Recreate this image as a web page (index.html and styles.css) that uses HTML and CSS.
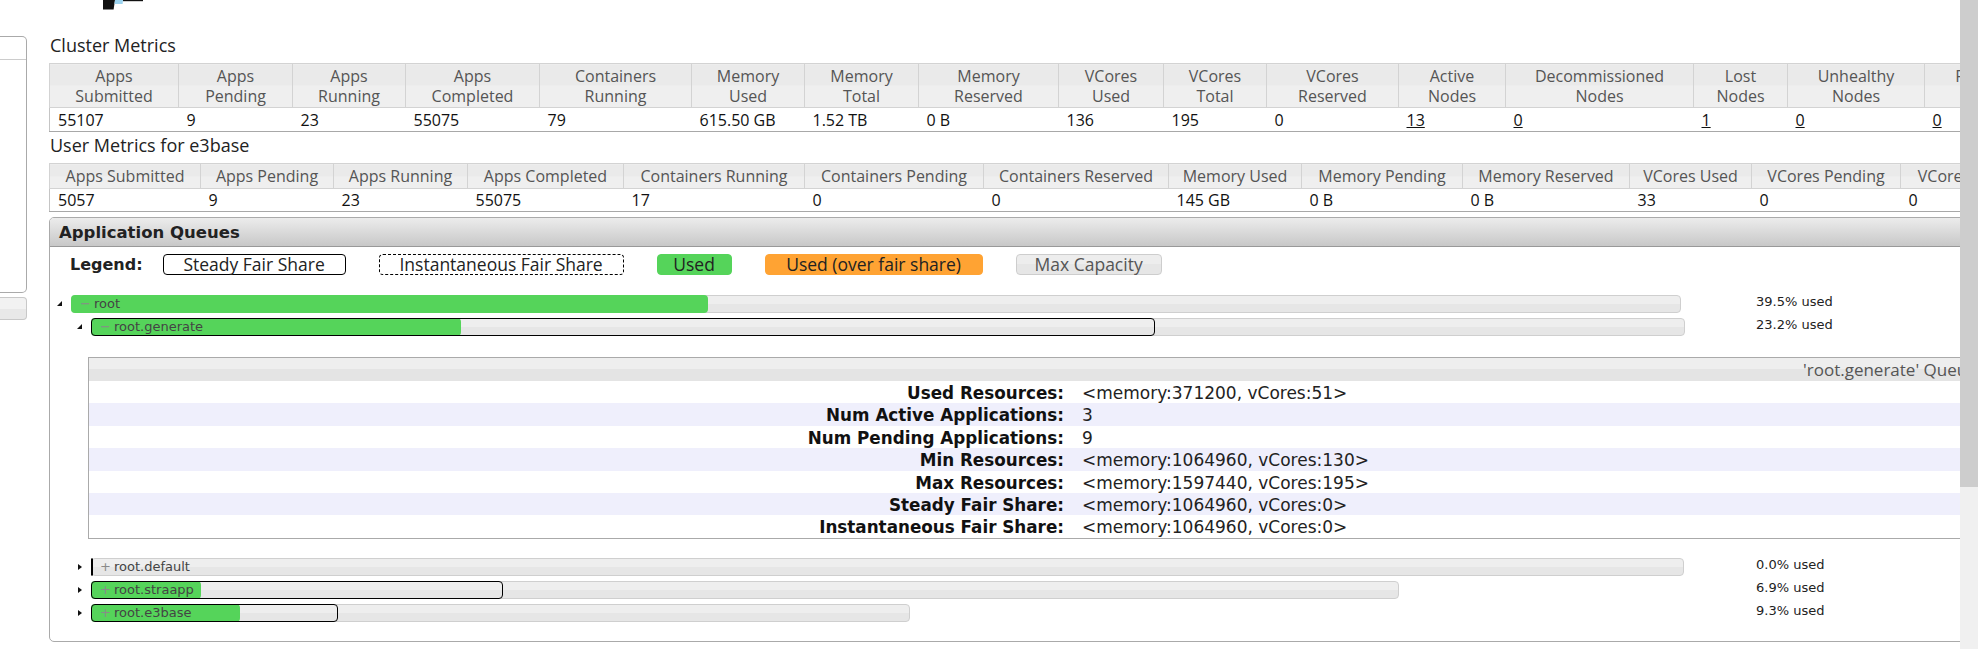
FILE: index.html
```html
<!DOCTYPE html>
<html lang="en">
<head>
<meta charset="utf-8">
<title>Fair Scheduler</title>
<link rel="stylesheet" href="styles.css">
</head>
<body>
<div class="page">
  <header class="top">
    <svg class="logo" width="45" height="10" viewBox="0 0 45 10">
      <path d="M3 0H15L13.6 9.5H3Z" fill="#111"/>
      <path d="M15 0H23L22.6 4H14.5Z" fill="#9cd3ef"/>
      <rect x="23" y="0" width="20" height="1.2" fill="#111"/>
    </svg>
  </header>
  <div class="layout">
    <nav class="nav">
      <div class="nav-box"><div class="nav-head"></div></div>
      <div class="nav-tab"></div>
    </nav>
    <main class="content">
      <h3 class="title">Cluster Metrics</h3>
      <table class="metrics cluster">
        <colgroup>
          <col><col><col><col><col><col><col><col><col><col><col><col><col><col><col><col>
        </colgroup>
        <thead>
          <tr>
            <th>Apps<br>Submitted</th>
            <th>Apps<br>Pending</th>
            <th>Apps<br>Running</th>
            <th>Apps<br>Completed</th>
            <th>Containers<br>Running</th>
            <th>Memory<br>Used</th>
            <th>Memory<br>Total</th>
            <th>Memory<br>Reserved</th>
            <th>VCores<br>Used</th>
            <th>VCores<br>Total</th>
            <th>VCores<br>Reserved</th>
            <th>Active<br>Nodes</th>
            <th>Decommissioned<br>Nodes</th>
            <th>Lost<br>Nodes</th>
            <th>Unhealthy<br>Nodes</th>
            <th>Rebooted<br>Nodes</th>
          </tr>
        </thead>
        <tbody>
          <tr>
            <td>55107</td>
            <td>9</td>
            <td>23</td>
            <td>55075</td>
            <td>79</td>
            <td>615.50 GB</td>
            <td>1.52 TB</td>
            <td>0 B</td>
            <td>136</td>
            <td>195</td>
            <td>0</td>
            <td><a href="#">13</a></td>
            <td><a href="#">0</a></td>
            <td><a href="#">1</a></td>
            <td><a href="#">0</a></td>
            <td><a href="#">0</a></td>
          </tr>
        </tbody>
      </table>

      <h3 class="title">User Metrics for e3base</h3>
      <table class="metrics user">
        <colgroup>
          <col><col><col><col><col><col><col><col><col><col><col><col><col>
        </colgroup>
        <thead>
          <tr>
            <th>Apps Submitted</th>
            <th>Apps Pending</th>
            <th>Apps Running</th>
            <th>Apps Completed</th>
            <th>Containers Running</th>
            <th>Containers Pending</th>
            <th>Containers Reserved</th>
            <th>Memory Used</th>
            <th>Memory Pending</th>
            <th>Memory Reserved</th>
            <th>VCores Used</th>
            <th>VCores Pending</th>
            <th>VCores Reserved</th>
          </tr>
        </thead>
        <tbody>
          <tr>
            <td>5057</td>
            <td>9</td>
            <td>23</td>
            <td>55075</td>
            <td>17</td>
            <td>0</td>
            <td>0</td>
            <td>145 GB</td>
            <td>0 B</td>
            <td>0 B</td>
            <td>33</td>
            <td>0</td>
            <td>0</td>
          </tr>
        </tbody>
      </table>

      <section class="queues">
        <div class="queues-head">Application Queues</div>
        <div class="queues-body">
          <div class="legend">
            <span class="legend-title">Legend:</span>
            <span class="lg lg-steady">Steady Fair Share</span>
            <span class="lg lg-instant">Instantaneous Fair Share</span>
            <span class="lg lg-used">Used</span>
            <span class="lg lg-over">Used (over fair share)</span>
            <span class="lg lg-max">Max Capacity</span>
          </div>

          <ul class="tree">
            <li>
              <div class="qrow">
                <i class="tri tri-open"></i>
                <div class="slot">
                  <div class="bar" style="width:1610px">
                    <span class="used" style="width:637px"></span>
                    <span class="qname"><b class="qicon">−</b>root</span>
                  </div>
                </div>
                <span class="pct">39.5% used</span>
              </div>
              <ul>
                <li>
                  <div class="qrow">
                    <i class="tri tri-open"></i>
                    <div class="slot">
                      <div class="bar" style="width:1594px">
                        <span class="used" style="width:370px"></span>
                        <span class="steady" style="width:1064px"></span>
                        <span class="qname"><b class="qicon">−</b>root.generate</span>
                      </div>
                    </div>
                    <span class="pct">23.2% used</span>
                  </div>
                  <div class="qinfo">
                    <div class="qinfo-head">'root.generate' Queue Status</div>
                    <table class="qinfo-table">
                      <tr><th>Used Resources:</th><td>&lt;memory:371200, vCores:51&gt;</td></tr>
                      <tr><th>Num Active Applications:</th><td>3</td></tr>
                      <tr><th>Num Pending Applications:</th><td>9</td></tr>
                      <tr><th>Min Resources:</th><td>&lt;memory:1064960, vCores:130&gt;</td></tr>
                      <tr><th>Max Resources:</th><td>&lt;memory:1597440, vCores:195&gt;</td></tr>
                      <tr><th>Steady Fair Share:</th><td>&lt;memory:1064960, vCores:0&gt;</td></tr>
                      <tr><th>Instantaneous Fair Share:</th><td>&lt;memory:1064960, vCores:0&gt;</td></tr>
                    </table>
                  </div>
                </li>
                <li>
                  <div class="qrow">
                    <i class="tri tri-closed"></i>
                    <div class="slot">
                      <div class="bar" style="width:1593px">
                        <span class="steady" style="width:2px"></span>
                        <span class="qname"><b class="qicon">+</b>root.default</span>
                      </div>
                    </div>
                    <span class="pct">0.0% used</span>
                  </div>
                </li>
                <li>
                  <div class="qrow">
                    <i class="tri tri-closed"></i>
                    <div class="slot">
                      <div class="bar" style="width:1308px">
                        <span class="used" style="width:110px"></span>
                        <span class="steady" style="width:412px"></span>
                        <span class="qname"><b class="qicon">+</b>root.straapp</span>
                      </div>
                    </div>
                    <span class="pct">6.9% used</span>
                  </div>
                </li>
                <li>
                  <div class="qrow">
                    <i class="tri tri-closed"></i>
                    <div class="slot">
                      <div class="bar" style="width:819px">
                        <span class="used" style="width:149px"></span>
                        <span class="steady" style="width:247px"></span>
                        <span class="qname"><b class="qicon">+</b>root.e3base</span>
                      </div>
                    </div>
                    <span class="pct">9.3% used</span>
                  </div>
                </li>
              </ul>
            </li>
          </ul>
        </div>
      </section>
    </main>
  </div>
  <div class="vscroll"><div class="vscroll-thumb"></div></div>
</div>
</body>
</html>
```
FILE: styles.css
```css
* { box-sizing: border-box; }
html, body { margin: 0; padding: 0; background: #fff; }
body {
  width: 1978px;
  height: 649px;
  overflow: hidden;
  font-family: "Open Sans", "Noto Sans", sans-serif;
  color: #222;
}
.page {
  position: relative;
  width: 1978px;
  height: 649px;
  overflow: hidden;
}

/* header fragment */
.top { height: 32px; padding-left: 100px; }
.logo { display: block; }

.layout { display: flex; align-items: flex-start; }

/* left navigation stub */
.nav { flex: 0 0 27px; width: 27px; padding-top: 4px; }
.nav-box {
  margin-left: -11px;
  width: 38px;
  height: 257px;
  border: 1px solid #aaa;
  border-left: none;
  border-radius: 0 5px 5px 0;
}
.nav-head { height: 23px; border-bottom: 1px solid #ccc; }
.nav-tab {
  margin-top: 4px;
  margin-left: -11px;
  width: 38px;
  height: 23px;
  border: 1px solid #c8c8c8;
  border-left: none;
  border-radius: 0 4px 4px 0;
  background: linear-gradient(#f2f2f2 50%, #e8e8e8 50%);
}

.content { flex: 0 0 2011px; width: 2011px; margin-left: 22px; }

.title {
  margin: 2px 0 7px;
  padding-left: 1px;
  height: 22px;
  font-size: 18px;
  font-weight: 400;
  line-height: 22px;
  color: #222;
}

/* metric tables */
.metrics {
  border-collapse: collapse;
  table-layout: fixed;
  border: 1px solid #c5c5c5;
  border-bottom-color: #a8a8a8;
}
.metrics th {
  font-weight: 400;
  font-size: 16px;
  line-height: 20px;
  color: #555;
  background: linear-gradient(#eaeaea 50%, #efefef 50%);
  border: 1px solid #d3d3d3;
  padding: 0 2px;
  text-align: center;
  white-space: nowrap;
  overflow: hidden;
}
.metrics td {
  font-size: 16px;
  padding: 0 0 0 8px;
  text-align: left;
  color: #111;
  white-space: nowrap;
  overflow: hidden;
}
.metrics a { color: #111; text-decoration: underline; }
.cluster { width: 2009px; }
.cluster th { height: 44px; }
.cluster td { height: 24px; }
.user { width: 2011px; }
.user th { height: 25px; }
.user td { height: 23px; }

.cluster col:nth-child(1) { width: 129px; }
.cluster col:nth-child(2) { width: 114px; }
.cluster col:nth-child(3) { width: 113px; }
.cluster col:nth-child(4) { width: 134px; }
.cluster col:nth-child(5) { width: 152px; }
.cluster col:nth-child(6) { width: 113px; }
.cluster col:nth-child(7) { width: 114px; }
.cluster col:nth-child(8) { width: 140px; }
.cluster col:nth-child(9) { width: 105px; }
.cluster col:nth-child(10) { width: 103px; }
.cluster col:nth-child(11) { width: 132px; }
.cluster col:nth-child(12) { width: 107px; }
.cluster col:nth-child(13) { width: 188px; }
.cluster col:nth-child(14) { width: 94px; }
.cluster col:nth-child(15) { width: 137px; }
.cluster col:nth-child(16) { width: 134px; }

.user col:nth-child(1) { width: 151px; }
.user col:nth-child(2) { width: 133px; }
.user col:nth-child(3) { width: 134px; }
.user col:nth-child(4) { width: 156px; }
.user col:nth-child(5) { width: 181px; }
.user col:nth-child(6) { width: 179px; }
.user col:nth-child(7) { width: 185px; }
.user col:nth-child(8) { width: 133px; }
.user col:nth-child(9) { width: 161px; }
.user col:nth-child(10) { width: 167px; }
.user col:nth-child(11) { width: 122px; }
.user col:nth-child(12) { width: 149px; }
.user col:nth-child(13) { width: 160px; }

/* application queues */
.queues {
  margin-top: 5px;
  width: 2011px;
  border: 1px solid #aaa;
  border-radius: 5px;
}
.queues-head {
  height: 29px;
  padding-left: 9px;
  background: linear-gradient(#ececec, #c8c8c8);
  border-bottom: 1px solid #999;
  border-radius: 4px 4px 0 0;
  font: bold 16.5px/29px "DejaVu Sans", sans-serif;
  color: #222;
}
.queues-body { padding: 6px 0 14px 0; }

.legend {
  display: flex;
  align-items: center;
  height: 22px;
  padding-left: 20px;
}
.legend-title {
  margin-right: 20px;
  font: bold 16px/21px "DejaVu Sans", sans-serif;
  color: #222;
}
.lg {
  height: 21px;
  border-radius: 4px;
  font-size: 17.5px;
  line-height: 19px;
  text-align: center;
  color: #222;
  white-space: nowrap;
}
.lg + .lg { margin-left: 33px; }
.lg-steady { width: 183px; border: 1px solid #000; }
.lg-instant { width: 245px; border: 1px dashed #000; }
.lg-used { width: 75px; background: #55d45a; border: 1px solid #55d45a; }
.lg-over { width: 218px; background: #ffa333; border: 1px solid #ffa333; }
.lg-max {
  width: 146px;
  border: 1px solid #cdcdcd;
  background: linear-gradient(#ededed 50%, #e6e6e6 50%);
  color: #555;
}

/* queue tree */
.tree {
  list-style: none;
  margin: 20px 0 0 5px;
  padding: 0;
  width: 1851px;
}
.tree ul { list-style: none; margin: 0; padding: 0 0 0 20px; }
.qrow { display: flex; align-items: flex-start; height: 23px; }
.tri { flex: 0 0 16px; height: 18px; }
.tri::before { content: ""; display: block; width: 0; height: 0; border-style: solid; }
.tri-open::before {
  margin: 6px 0 0 2px;
  border-width: 0 0 5px 5px;
  border-color: transparent transparent #111 transparent;
}
.tri-closed::before {
  margin: 6px 0 0 3px;
  border-width: 3.5px 0 3.5px 4px;
  border-color: transparent transparent transparent #111;
}
.slot { flex: 1 1 auto; min-width: 0; }
.pct {
  flex: 0 0 150px;
  font: 13px/14px "DejaVu Sans", sans-serif;
  color: #222;
  white-space: nowrap;
}
.bar {
  position: relative;
  height: 18px;
  border: 1px solid #cfcfcf;
  border-radius: 4px;
  background: linear-gradient(#eeeeee 50%, #e6e6e6 50%);
}
.used {
  position: absolute;
  left: -1px;
  top: -1px;
  bottom: -1px;
  background: #55d45a;
  border-radius: 4px;
}
.steady {
  position: absolute;
  left: -1px;
  top: -1px;
  bottom: -1px;
  border: 1px solid #000;
  border-radius: 4px;
}
.qname {
  position: relative;
  display: flex;
  align-items: center;
  height: 16px;
  padding-left: 8px;
  font: 13px/16px "DejaVu Sans", sans-serif;
  color: #444;
  white-space: nowrap;
}
.qicon { width: 14px; font-weight: 400; color: #8a8a8a; }

/* queue info panel */
.qinfo {
  margin: 16px 0 19px 13px;
  width: 1962px;
  border: 1px solid #aaa;
}
.qinfo-head {
  height: 23px;
  padding-left: 1714px;
  background: linear-gradient(#eeeeee 50%, #e4e4e4 50%);
  font-size: 17px;
  line-height: 24px;
  color: #555;
  white-space: nowrap;
}
.qinfo-table { border-collapse: collapse; width: 100%; }
.qinfo-table th {
  width: 977px;
  height: 22.4px;
  padding: 3px 2px 0 0;
  text-align: right;
  font: bold 16.8px/19.4px "DejaVu Sans", sans-serif;
  color: #111;
  white-space: nowrap;
}
.qinfo-table td {
  padding: 3px 0 0 16px;
  font: 17px/19.4px "DejaVu Sans", sans-serif;
  color: #222;
  white-space: nowrap;
}
.qinfo-table tr:nth-child(even) { background: #efeffc; }

/* page scrollbar (overlays the right edge) */
.vscroll {
  position: absolute;
  top: 0;
  right: 0;
  width: 18px;
  height: 649px;
  background: #f0f0f0;
}
.vscroll-thumb { height: 487px; background: #cdcdcd; }
```
